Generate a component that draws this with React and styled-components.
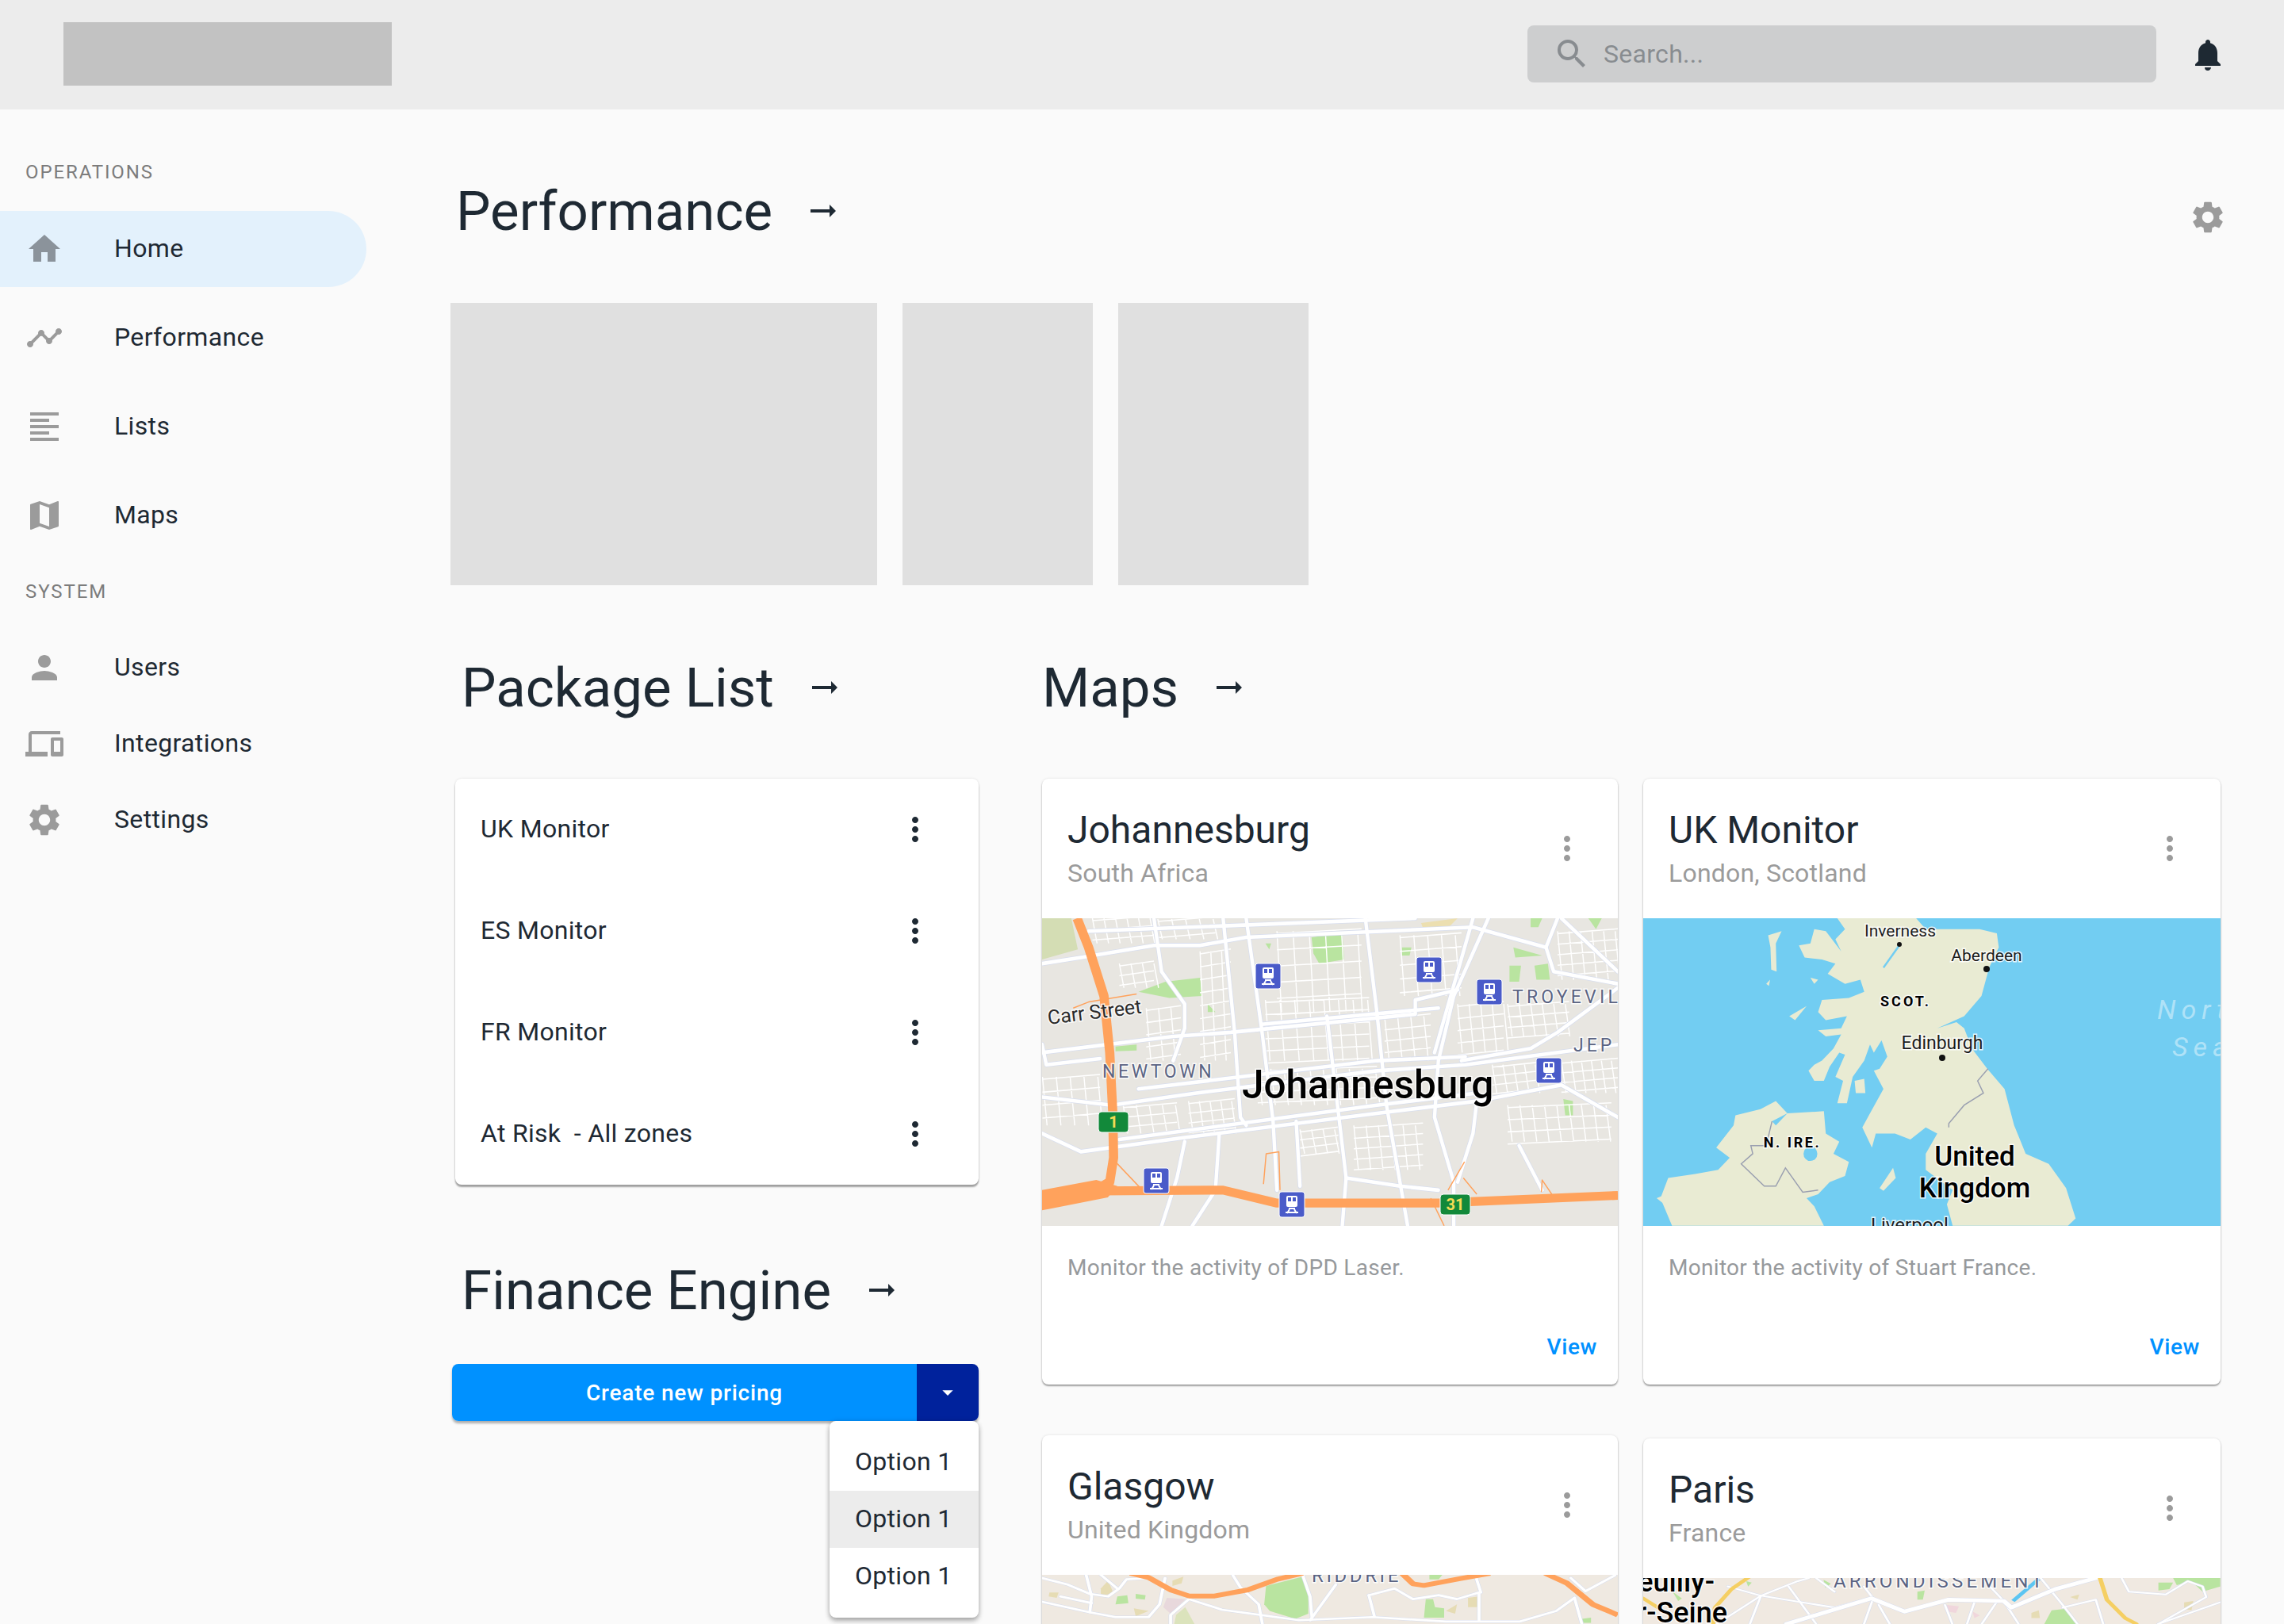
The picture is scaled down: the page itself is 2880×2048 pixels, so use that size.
import React from "react";
import styled, { createGlobalStyle } from "styled-components";
import {
  MdArrowDropDown,
  MdArrowRightAlt,
  MdDevices,
  MdFormatAlignLeft,
  MdHome,
  MdMap,
  MdMoreVert,
  MdNotifications,
  MdPerson,
  MdSearch,
  MdSettings,
  MdTimeline,
} from "react-icons/md";

const GlobalStyle = createGlobalStyle`
  html, body {
    margin: 0;
    background: #fafafa;
    font-family: Roboto, "Liberation Sans", sans-serif;
    color: #1e2933;
  }
  #root {
    height: 2048px;
    overflow: hidden;
  }
`;

const Header = styled.header`
  height: 138px;
  box-sizing: border-box;
  padding: 0 0 2px 80px;
  display: flex;
  align-items: center;
  background: #ececec;
`;

const Logo = styled.div`
  width: 414px;
  height: 80px;
  background: #c2c2c2;
`;

const SearchBox = styled.div`
  width: 793px;
  height: 72px;
  margin-left: auto;
  display: flex;
  align-items: center;
  gap: 16px;
  padding-left: 32px;
  box-sizing: border-box;
  border-radius: 8px;
  background: #cdcecf;
  color: #888c90;
  font-size: 32px;
  letter-spacing: 0.3px;
`;

const BellButton = styled.div`
  width: 48px;
  height: 48px;
  margin: 2px 72px 0 41px;
  display: flex;
  color: #1e2933;
`;

const Layout = styled.div`
  display: flex;
`;

const Sidebar = styled.nav`
  width: 568px;
  flex: none;
  padding-top: 62px;
`;

const NavHeading = styled.div`
  height: 34px;
  line-height: 34px;
  padding-left: 32px;
  margin: ${(p) => p.$above || 0}px 0 ${(p) => p.$gap}px;
  color: #7c7c7c;
  font-size: 24px;
  letter-spacing: 1.9px;
`;

const NavItem = styled.div`
  width: 462px;
  height: 96px;
  margin-bottom: ${(p) => p.$gap}px;
  display: flex;
  align-items: center;
  gap: 64px;
  padding-left: 32px;
  box-sizing: border-box;
  border-radius: 0 48px 48px 0;
  background: ${(p) => (p.$active ? "#e3f1fc" : "transparent")};
  font-size: 32px;
  letter-spacing: 0.35px;
  color: #1e2933;
  svg {
    flex: none;
    color: ${(p) => (p.$active ? "#8b939b" : "#9b9b9b")};
  }
`;

const NavLabel = styled.span`
  margin-bottom: 3px;
`;

const Main = styled.main`
  flex: 1;
  min-width: 0;
  padding-right: 80px;
`;

const PerformanceRow = styled.div`
  height: 96px;
  margin-top: 80px;
  display: flex;
  align-items: center;
  justify-content: space-between;
  padding-left: 7px;
`;

const GearButton = styled.div`
  display: flex;
  margin: 16px -8px 0 0;
  color: #9b9b9b;
`;

const SectionTitle = styled.h2`
  height: 96px;
  margin: 0 0 ${(p) => p.$below || 0}px;
  padding-left: ${(p) => p.$inset || 0}px;
  display: flex;
  align-items: center;
  gap: 40px;
  font-size: 69px;
  font-weight: 400;
  color: #1e2933;
`;

const Placeholders = styled.div`
  height: 356px;
  margin: 68px 0 81px;
  display: flex;
  gap: 32px;
`;

const Placeholder = styled.div`
  width: ${(p) => p.$width}px;
  background: #e0e0e0;
`;

const Columns = styled.div`
  display: flex;
  gap: 80px;
`;

const LeftColumn = styled.div`
  width: 664px;
  margin-left: 2px;
  flex: none;
`;

const ListCard = styled.div`
  margin: 0 0 85px 4px;
  border-radius: 8px;
  background: #fff;
  box-shadow: 0 3px 2px rgba(0, 0, 0, 0.35), 0 0 3px rgba(0, 0, 0, 0.12);
`;

const ListRow = styled.div`
  height: 128px;
  display: flex;
  align-items: center;
  justify-content: space-between;
  padding: 0 56px 0 32px;
  font-size: 32px;
  letter-spacing: 0.3px;
  white-space: pre;
  svg {
    color: #1e2933;
  }
`;

const ListName = styled.span`
  margin-bottom: 2px;
`;

const SplitButton = styled.div`
  position: relative;
  height: 72px;
  margin-top: 45px;
  display: flex;
  border-radius: 8px;
  box-shadow: 0 3px 3px rgba(0, 0, 0, 0.3);
  color: #fff;
`;

const ButtonLabel = styled.div`
  flex: 1;
  display: flex;
  align-items: center;
  justify-content: center;
  border-radius: 8px 0 0 8px;
  background: #0091ff;
  font-size: 28px;
  font-weight: 500;
  letter-spacing: 0.8px;
`;

const ButtonCaret = styled.div`
  width: 78px;
  display: flex;
  align-items: center;
  justify-content: center;
  border-radius: 0 8px 8px 0;
  background: #00229c;
`;

const DropMenu = styled.div`
  position: absolute;
  top: 72px;
  right: 0;
  width: 188px;
  padding: 16px 0;
  border-radius: 8px;
  background: #fff;
  color: #1e2933;
  box-shadow: 0 4px 6px rgba(0, 0, 0, 0.3), 0 0 6px rgba(0, 0, 0, 0.12);
`;

const DropItem = styled.div`
  height: 70px;
  line-height: 70px;
  padding: 0 0 2px 32px;
  font-size: 32px;
  letter-spacing: 0.3px;
  background: ${(p) => (p.$hover ? "#ececec" : "transparent")};
`;

const RightColumn = styled.div`
  flex: 1;
  min-width: 0;
`;

const CardGrid = styled.div`
  display: flex;
  gap: 32px;
`;

const CardStack = styled.div`
  width: ${(p) => p.$width}px;
  flex: none;
  display: flex;
  flex-direction: column;
  gap: ${(p) => p.$gap}px;
`;

const MapCard = styled.article`
  height: 764px;
  flex: none;
  display: flex;
  flex-direction: column;
  border-radius: 8px;
  overflow: hidden;
  background: #fff;
  box-shadow: 0 2px 2px rgba(0, 0, 0, 0.35), 0 0 3px rgba(0, 0, 0, 0.12);
`;

const CardHead = styled.div`
  height: 176px;
  flex: none;
  display: flex;
  align-items: center;
  justify-content: space-between;
  padding: 0 40px 0 32px;
  svg {
    color: #9b9b9b;
  }
`;

const CardTitle = styled.div`
  height: 56px;
  line-height: 56px;
  font-size: 48px;
  color: #1e2933;
`;

const CardSubtitle = styled.div`
  height: 40px;
  line-height: 40px;
  margin-top: 6px;
  font-size: 32px;
  letter-spacing: 0.2px;
  color: #9b9b9b;
`;

const MapFrame = styled.svg`
  display: block;
  width: 100%;
  height: 388px;
  flex: none;
`;

const CardFoot = styled.div`
  flex: 1;
  display: flex;
  flex-direction: column;
  padding: 33px 26px 0 32px;
`;

const CardText = styled.div`
  height: 40px;
  line-height: 40px;
  font-size: 28px;
  letter-spacing: 0.3px;
  color: #96999c;
`;

const ViewLink = styled.div`
  height: 40px;
  line-height: 40px;
  margin-top: 60px;
  text-align: right;
  font-size: 28px;
  font-weight: 500;
  letter-spacing: 0.6px;
  color: #0091ff;
`;

const MapLabel = styled.text`
  font-family: Roboto, sans-serif;
  font-size: ${(p) => p.$size}px;
  font-weight: ${(p) => p.$weight || 400};
  font-style: ${(p) => (p.$italic ? "italic" : "normal")};
  letter-spacing: ${(p) => p.$spacing || 0}px;
  fill: ${(p) => p.$color || "#1c1c1c"};
  stroke: ${(p) => (p.$halo === false ? "none" : "rgba(255, 255, 255, 0.8)")};
  stroke-width: 3px;
  paint-order: stroke;
  text-anchor: ${(p) => p.$anchor || "start"};
`;

const Roads = ({ paths, width, casing = "#d8deee", color = "#fff" }) => (
  <g fill="none" strokeLinejoin="round" strokeLinecap="round">
    {casing &&
      paths.map((d) => <path key={d} d={d} stroke={casing} strokeWidth={width + 3} />)}
    {paths.map((d) => (
      <path key={d} d={d} stroke={color} strokeWidth={width} />
    ))}
  </g>
);

const Areas = ({ shapes, color }) => (
  <g fill={color}>
    {shapes.map((points) => (
      <polygon key={points} points={points} />
    ))}
  </g>
);

// thin street blocks
const gridPath = ([x0, y0, x1, y1, dx, dy]) => {
  let d = "";
  for (let x = x0; x <= x1; x += dx) d += `M${x} ${y0}L${x + 12} ${y1}`;
  for (let y = y0; y <= y1; y += dy) d += `M${x0} ${y + 6}L${x1} ${y - 6}`;
  return d;
};

const TrainPin = ({ x, y }) => (
  <g transform={`translate(${x - 16} ${y - 16})`}>
    <rect width="32" height="32" rx="3" fill="#4a5bc9" stroke="#fff" />
    <rect x="9" y="5" width="14" height="14" rx="2" fill="#fff" />
    <rect x="11" y="7" width="4" height="5" fill="#4a5bc9" />
    <rect x="17" y="7" width="4" height="5" fill="#4a5bc9" />
    <path d="M12 21h8M10 27l3-5M22 27l-3-5M8 26h16" stroke="#fff" strokeWidth="2" fill="none" />
  </g>
);

const RouteShield = ({ x, y, width, label }) => (
  <g>
    <rect
      x={x - width / 2}
      y={y - 13}
      width={width}
      height="26"
      rx="4"
      fill="#12893a"
      stroke="#fff"
    />
    <MapLabel x={x} y={y + 7} $size={20} $weight={700} $color="#f3dc55" $anchor="middle" $halo={false}>
      {label}
    </MapLabel>
  </g>
);

const joburgGrids = [
  [610, 570, 880, 720, 38, 30],
  [640, 400, 860, 600, 42, 40],
  [920, 610, 1040, 720, 34, 28],
  [1240, 830, 1510, 920, 32, 30],
  [840, 880, 1020, 990, 32, 26],
  [700, 890, 800, 950, 30, 20],
  [30, 760, 180, 880, 36, 32],
  [300, 590, 390, 720, 32, 30],
  [440, 450, 520, 720, 28, 32],
  [960, 410, 1120, 560, 36, 34],
  [1110, 580, 1230, 700, 30, 30],
  [1240, 580, 1400, 660, 30, 26],
  [1200, 730, 1320, 800, 28, 22],
  [1380, 720, 1527, 800, 26, 24],
  [160, 368, 320, 430, 30, 24],
  [330, 370, 480, 420, 36, 20],
  [240, 830, 380, 900, 34, 24],
  [1370, 400, 1527, 520, 30, 26],
  [410, 820, 530, 900, 28, 24],
  [590, 740, 900, 830, 34, 26],
  [230, 480, 320, 540, 30, 24],
];

const joburgRoads = [
  "M29 480L130 465L320 435L440 435L560 415L1150 390L1340 440",
  "M150 400L1000 368",
  "M320 368L340 500L400 580L400 640L370 720",
  "M500 368L530 650L545 860L560 880",
  "M560 368L600 640L630 870L640 1040",
  "M870 368L900 600L925 830L960 1020L980 1128",
  "M1190 368L1100 560L1060 720L1050 860L1100 1020L1100 1128",
  "M1150 368L1050 700",
  "M29 700L370 660L520 650L1000 605L1000 570L1110 545",
  "M600 630L1060 590",
  "M29 810L210 830L430 800L900 745L1130 730L1527 680",
  "M280 790L900 720L1130 710",
  "M29 900L130 945L400 910L900 850L1160 820L1380 780L1527 860",
  "M230 915L900 830L1160 800",
  "M1527 540L1370 650L1300 690L1120 720",
  "M1370 368L1340 440L1360 500L1527 530",
  "M1380 368L1527 500",
  "M810 1128L820 1010L960 1030L1060 1040",
  "M400 920L380 1010L340 1128",
  "M690 870L700 1030",
  "M1160 820L1150 900L1110 1020",
  "M770 610L800 850L820 1010",
  "M490 900L480 1040L420 1128",
  "M29 680L40 730L180 715",
  "M1270 930L1330 1040",
];

const JohannesburgMap = () => (
  <MapFrame viewBox="0 0 726 388" preserveAspectRatio="none">
    <rect width="726" height="388" fill="#e8e6e1" />
    <g transform="scale(.4847 .5102) translate(-29 -368)">
      <Areas color="#d4ddb4" shapes={["29,368 105,368 122,445 29,470"]} />
      <Areas color="#ecdfb0" shapes={["1015,380 1110,368 1085,392 1020,392"]} />
      <Areas
        color="#b9e4a0"
        shapes={[
          "730,415 810,405 815,470 750,480 735,455",
          "280,550 350,525 440,515 445,560 360,565",
          "1245,485 1275,485 1270,525 1245,525",
          "1310,485 1345,480 1350,520 1315,520",
          "1255,440 1330,460 1260,465",
          "1300,368 1330,368 1320,390 1300,390",
          "1450,368 1485,368 1470,395",
          "1385,815 1410,820 1410,855 1390,855",
          "965,440 990,440 985,460 965,460",
          "610,430 625,430 620,445",
          "220,685 275,680 275,695 220,697",
          "460,580 480,600 460,600",
        ]}
      />
      <path d={joburgGrids.map(gridPath).join("")} stroke="#fff" strokeWidth="3" fill="none" />
      <Roads paths={joburgRoads} width={9} />
      <g fill="none" stroke="#ffa25c" strokeLinejoin="round">
        <path d="M120 368L150 440L190 560L205 700L213 850L215 960L205 1020L160 1045" strokeWidth="24" />
        <path d="M180 1042L500 1040L640 1072L1060 1072L1527 1053" strokeWidth="22" />
        <path d="M605 1025L612 950L645 945L648 1040M220 970L290 1040M1040 1060L1075 1128M1125 1010L1160 1050M1328 1045L1330 1015L1355 1050M110 590L150 575L275 555M1085 1040L1128 970" strokeWidth="3" />
      </g>
      <Areas color="#ffa25c" shapes={["29,1040 170,1015 225,1030 200,1058 29,1090"]} />
    </g>
    <MapLabel x="8" y="134" $size={25} transform="rotate(-7 8 134)" $color="#2a2a2a">
      Carr Street
    </MapLabel>
    <MapLabel x="76" y="201" $size={23} $spacing={3.6} $color="#5b6483">NEWTOWN</MapLabel>
    <MapLabel x="593" y="107" $size={23} $spacing={4.2} $color="#5b6483">TROYEVILLE</MapLabel>
    <MapLabel x="670" y="168" $size={23} $spacing={4} $color="#5b6483">JEP</MapLabel>
    <MapLabel x="252" y="227" $size={49.5} $weight={500} $color="#000">Johannesburg</MapLabel>
    <TrainPin x={285} y={73} />
    <TrainPin x={488} y={65} />
    <TrainPin x={564} y={93} />
    <TrainPin x={639} y={192} />
    <TrainPin x={144} y={331} />
    <TrainPin x={315} y={361} />
    <RouteShield x={90} y={257} width={38} label="1" />
    <RouteShield x={521} y={361} width={38} label="31" />
  </MapFrame>
);

const UkMap = () => (
  <MapFrame viewBox="0 0 728 388" preserveAspectRatio="none">
    <rect width="728" height="388" fill="#72cdf2" />
    <g transform="scale(.4847 .5102) translate(-25 -368)">
      <Areas
        color="#e9ebd3"
        shapes={[
          "530,368 735,368 760,395 900,395 945,405 950,440 925,490 905,560 860,610 790,640 840,625 860,640 880,690 900,715 920,740 965,790 990,880 1020,950 1080,975 1125,1035 1150,1110 1130,1128 830,1128 815,1075 830,1040 760,990 760,950 790,900 760,885 720,915 680,900 630,900 620,935 595,885 615,850 650,790 625,745 640,740 660,710 645,670 625,700 615,680 600,720 570,760 555,825 530,825 545,770 525,760 550,705 535,700 510,735 495,770 470,770 455,745 470,730 490,720 520,690 540,655 500,660 480,645 540,640 555,610 500,620 480,600 490,570 560,565 600,550 590,520 550,530 505,505 525,480 490,470 445,465 430,435 460,430 470,395 500,400 540,450 525,420 550,395",
          "100,1128 70,1060 90,1010 160,1000 220,990 250,960 215,935 260,880 265,855 330,840 370,820 400,850 495,845 500,900 535,920 520,950 560,970 550,1005 510,1020 480,1050 450,1060 470,1080 495,1128",
          "640,1035 675,985 682,1010 650,1042",
          "575,770 600,765 603,800 578,800",
          "350,410 385,400 370,430 372,500 358,495 356,440",
          "405,610 450,585 420,620",
          "460,515 480,520 470,530",
          "345,530 355,520 352,535",
          "60,1060 85,1050 80,1075",
        ]}
      />
      <g fill="#72cdf2">
        <ellipse cx="460" cy="950" rx="18" ry="18" />
        <path d="M360 870L400 850L370 880Z" />
      </g>
      <path d="M650 490L695 430" stroke="#72cdf2" strokeWidth="5" fill="none" />
      <g fill="none" stroke="#9a9fb0" strokeWidth="3">
        <path d="M360 870L345 930L305 930L310 950L280 975L340 1030L370 1030L395 985L440 1045L480 1040" />
        <path d="M922 740L895 770L910 800L860 830L820 875L820 885" />
      </g>
    </g>
    <circle cx="323" cy="33" r="3" fill="#111" />
    <circle cx="433" cy="64" r="4" fill="#111" />
    <circle cx="377" cy="176" r="4" fill="#111" />
    <MapLabel x="324" y="23" $size={21} $anchor="middle">Inverness</MapLabel>
    <MapLabel x="433" y="54" $size={21} $anchor="middle">Aberdeen</MapLabel>
    <MapLabel x="331" y="111" $size={18} $weight={700} $spacing={3} $anchor="middle" $color="#000">SCOT.</MapLabel>
    <MapLabel x="377" y="165" $size={23} $anchor="middle">Edinburgh</MapLabel>
    <MapLabel x="188" y="289" $size={18} $weight={700} $spacing={2.6} $anchor="middle" $color="#000">N. IRE.</MapLabel>
    <MapLabel x="418" y="312" $size={35} $weight={500} $anchor="middle" $color="#000">United</MapLabel>
    <MapLabel x="418" y="352" $size={35} $weight={500} $anchor="middle" $color="#000">Kingdom</MapLabel>
    <MapLabel x="336" y="395" $size={24} $anchor="middle">Liverpool</MapLabel>
    <MapLabel x="648" y="127" $size={34} $italic $spacing={7} $color="rgba(255,255,255,0.45)" $halo={false}>North</MapLabel>
    <MapLabel x="667" y="174" $size={34} $italic $spacing={7} $color="rgba(255,255,255,0.45)" $halo={false}>Sea</MapLabel>
  </MapFrame>
);

const glasgowRoads = [
  "M0 30L70 55L130 90L180 100L210 70L230 35L290 30",
  "M0 120L130 160L200 178L290 178L320 130L335 30",
  "M400 110L490 150L700 190L900 178L1100 195L1300 195L1400 155L1450 105",
  "M710 20L730 100L735 180",
  "M800 55L730 190",
  "M890 95L905 175",
  "M890 95L960 70L1010 110L1080 95L1130 110L1190 85L1190 190",
  "M1180 20L1195 85",
  "M520 20L540 65L590 130L600 204",
  "M120 18L135 100L130 160",
  "M400 110L350 170L350 204",
  "M1450 105L1470 204",
  "M160 18L205 70M50 100L135 125M1440 30L1480 80L1560 20",
];

const GlasgowMap = () => (
  <MapFrame viewBox="0 0 726 388" preserveAspectRatio="none">
    <rect width="726" height="388" fill="#efe9e1" />
    <g transform="scale(.463 .333) translate(0 -18)">
      <Areas
        color="#e6dcb4"
        shapes={[
          "160,70 180,40 195,90 160,95",
          "355,40 385,25 380,50 355,60",
          "1100,155 1130,130 1125,165",
          "1160,105 1190,100 1190,140 1160,140",
          "250,145 290,155 255,175",
          "20,85 45,85 40,105 18,100",
        ]}
      />
      <Areas color="#e8d8dc" shapes={["340,105 390,110 350,165 330,140"]} />
      <Areas color="#dbe3bc" shapes={["365,170 390,140 415,204 360,204"]} />
      <Areas
        color="#b9e4a0"
        shapes={[
          "610,60 710,25 725,100 725,165 690,185 620,155 605,130",
          "205,100 232,95 235,125 200,130",
          "255,90 282,95 280,112 255,108",
          "1045,110 1065,110 1070,140 1095,145 1095,180 1040,180",
          "1055,18 1090,18 1080,35 1055,35",
          "1470,185 1495,180 1495,200 1470,200",
        ]}
      />
      <Roads paths={glasgowRoads} width={8} />
      <g fill="none" stroke="#ffa25c" strokeWidth="18" strokeLinejoin="round">
        <path d="M240 12L290 28L350 75L400 98L470 98L560 75L640 35L710 12" />
        <path d="M980 12L1010 52L1040 58L1140 32L1220 12" />
        <path d="M1370 12L1430 50L1500 130L1568 170" />
      </g>
    </g>
    <MapLabel x="340" y="9" $size={24} $spacing={3.6} $color="#5b6483">RIDDRIE</MapLabel>
  </MapFrame>
);

const parisRoads = [
  "M200 192L320 85L420 30L450 18",
  "M230 50L320 85L520 130L600 100",
  "M320 85L290 192",
  "M395 50L470 192",
  "M600 50L625 95L600 192",
  "M640 120L670 192",
  "M820 120L840 192",
  "M980 105L1020 192",
  "M1080 18L1140 120L1180 192",
  "M1300 18L1320 70L1420 80L1480 30L1520 50L1530 90L1400 192",
  "M1140 130L1230 100L1250 192",
  "M1568 110L1400 192",
  "M900 110L880 192",
  "M960 110L920 192",
  "M470 18L520 70M920 18L980 105",
];

const ParisMap = () => (
  <MapFrame viewBox="0 0 728 388" preserveAspectRatio="none">
    <rect width="728" height="388" fill="#f0e9e1" />
    <g transform="scale(.464 .333) translate(0 -18)">
      <Areas
        color="#e6dcb4"
        shapes={[
          "1055,150 1075,140 1078,170 1055,170",
          "1470,110 1495,105 1490,140 1470,135",
          "1160,90 1185,80 1180,100",
        ]}
      />
      <Areas color="#f0d6dc" shapes={["825,120 858,125 850,150 825,145", "895,145 915,160 900,170"]} />
      <Areas
        color="#b9e4a0"
        shapes={[
          "1400,35 1440,35 1430,60 1400,65",
          "1440,18 1568,18 1568,50 1520,70 1490,30 1450,45",
          "745,70 765,65 760,100 745,100",
          "490,25 510,40 495,55",
          "280,30 295,35 285,50",
          "80,70 105,95 95,105",
          "1110,140 1145,135 1180,192 1090,192",
        ]}
      />
      <Roads paths={parisRoads} width={6} />
      <Roads paths={["M390 192L620 95L710 145L830 100L980 105L1000 130L1120 60L1230 18"]} width={14} />
      <Roads
        paths={["M290 12L240 60L195 130L190 192", "M1240 12L1260 100L1310 170L1340 192", "M0 95L40 130"]}
        width={12}
        casing={null}
        color="#f5cf63"
      />
      <path d="M1005 105L1075 22" stroke="#5cc5f2" strokeWidth="12" fill="none" />
    </g>
    <MapLabel x="240" y="12" $size={24} $spacing={4.2} $color="#5b6483">ARRONDISSEMENT</MapLabel>
    <MapLabel x="90" y="17" $size={36} $weight={500} $color="#000" $anchor="end">Neuilly-</MapLabel>
    <MapLabel x="106" y="56" $size={36} $weight={500} $color="#000" $anchor="end">sur-Seine</MapLabel>
  </MapFrame>
);

const navOperations = [
  { label: "Home", Icon: MdHome, active: true },
  { label: "Performance", Icon: MdTimeline },
  { label: "Lists", Icon: MdFormatAlignLeft },
  { label: "Maps", Icon: MdMap },
];

const navSystem = [
  { label: "Users", Icon: MdPerson },
  { label: "Integrations", Icon: MdDevices },
  { label: "Settings", Icon: MdSettings },
];

const packages = ["UK Monitor", "ES Monitor", "FR Monitor", "At Risk  - All zones"];

const Card = ({ title, subtitle, text, children }) => (
  <MapCard>
    <CardHead>
      <div>
        <CardTitle>{title}</CardTitle>
        <CardSubtitle>{subtitle}</CardSubtitle>
      </div>
      <MdMoreVert size={48} />
    </CardHead>
    {children}
    <CardFoot>
      <CardText>{text}</CardText>
      <ViewLink>View</ViewLink>
    </CardFoot>
  </MapCard>
);

const App = () => (
  <>
    <GlobalStyle />
    <Header>
      <Logo />
      <SearchBox>
        <MdSearch size={48} />
        Search...
      </SearchBox>
      <BellButton>
        <MdNotifications size={48} />
      </BellButton>
    </Header>
    <Layout>
      <Sidebar>
        <NavHeading $gap={32}>OPERATIONS</NavHeading>
        {navOperations.map(({ label, Icon, active }) => (
          <NavItem key={label} $active={active} $gap={16}>
            <Icon size={48} />
            <NavLabel>{label}</NavLabel>
          </NavItem>
        ))}
        <NavHeading $above={31} $gap={31}>SYSTEM</NavHeading>
        {navSystem.map(({ label, Icon }) => (
          <NavItem key={label} $gap={0}>
            <Icon size={48} />
            <NavLabel>{label}</NavLabel>
          </NavItem>
        ))}
      </Sidebar>
      <Main>
        <PerformanceRow>
          <SectionTitle>
            Performance
            <MdArrowRightAlt size={48} />
          </SectionTitle>
          <GearButton>
            <MdSettings size={48} />
          </GearButton>
        </PerformanceRow>
        <Placeholders>
          <Placeholder $width={538} />
          <Placeholder $width={240} />
          <Placeholder $width={240} />
        </Placeholders>
        <Columns>
          <LeftColumn>
            <SectionTitle $below={67} $inset={12}>
              Package List
              <MdArrowRightAlt size={48} />
            </SectionTitle>
            <ListCard>
              {packages.map((name) => (
                <ListRow key={name}>
                  <ListName>{name}</ListName>
                  <MdMoreVert size={48} />
                </ListRow>
              ))}
            </ListCard>
            <SectionTitle $inset={12}>
              Finance Engine
              <MdArrowRightAlt size={48} />
            </SectionTitle>
            <SplitButton>
              <ButtonLabel>Create new pricing</ButtonLabel>
              <ButtonCaret>
                <MdArrowDropDown size={32} />
              </ButtonCaret>
              <DropMenu>
                <DropItem>Option 1</DropItem>
                <DropItem $hover>Option 1</DropItem>
                <DropItem>Option 1</DropItem>
              </DropMenu>
            </SplitButton>
          </LeftColumn>
          <RightColumn>
            <SectionTitle $below={67}>
              Maps
              <MdArrowRightAlt size={48} />
            </SectionTitle>
            <CardGrid>
              <CardStack $width={726} $gap={64}>
                <Card title="Johannesburg" subtitle="South Africa" text="Monitor the activity of DPD Laser.">
                  <JohannesburgMap />
                </Card>
                <Card title="Glasgow" subtitle="United Kingdom" text="Monitor the activity of DPD Laser.">
                  <GlasgowMap />
                </Card>
              </CardStack>
              <CardStack $width={728} $gap={68}>
                <Card title="UK Monitor" subtitle="London, Scotland" text="Monitor the activity of Stuart France.">
                  <UkMap />
                </Card>
                <Card title="Paris" subtitle="France" text="Monitor the activity of Stuart France.">
                  <ParisMap />
                </Card>
              </CardStack>
            </CardGrid>
          </RightColumn>
        </Columns>
      </Main>
    </Layout>
  </>
);

export default App;
